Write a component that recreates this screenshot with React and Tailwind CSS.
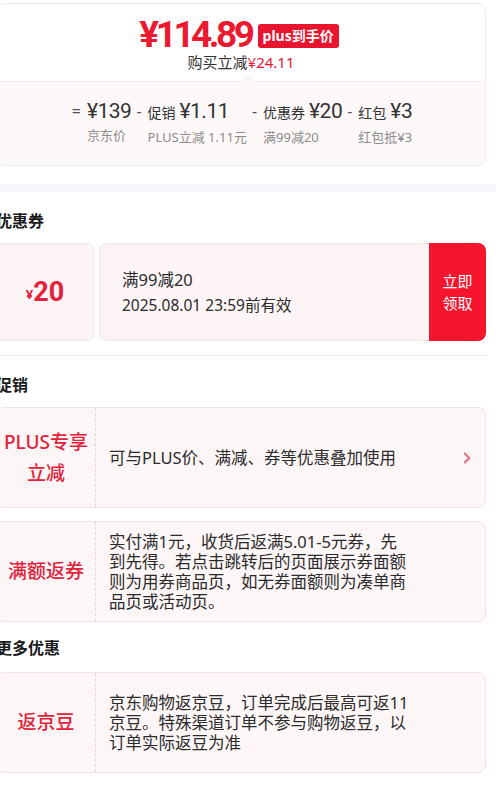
import React from 'react';
import { ChevronRight } from 'lucide-react';

const cjk = { fontFamily: '"Noto Sans", "Noto Sans CJK SC", sans-serif' };
const num = { fontFamily: 'Roboto, "Noto Sans CJK SC", sans-serif' };

const parts = [
  { op: '=', label: '', value: '¥139', sub: '京东价' },
  { op: '-', label: '促销', value: '¥1.11', sub: 'PLUS立减 1.11元' },
  { op: '-', label: '优惠券', value: '¥20', sub: '满99减20' },
  { op: '-', label: '红包', value: '¥3', sub: '红包抵¥3' },
];

const PromoCard = ({ title, lines, arrow }) => (
  <div className="flex h-[101px] rounded-[8px] border border-[#f3e1e4] bg-[#fdf6f7] overflow-hidden">
    <div className="w-[99px] shrink-0 flex items-center justify-center text-center text-[19px] font-medium leading-[31px] text-[#e3213a] border-r border-dashed border-[#ecd3d7]">
      {title}
    </div>
    <div className="flex-1 flex items-center pl-[13px] text-[16.5px] leading-[20px] text-[#2b2b2b]">
      <div>
        {lines.map((l, i) => (
          <div key={i}>{l}</div>
        ))}
      </div>
    </div>
    {arrow && (
      <div className="w-[36px] flex items-center justify-center text-[#e0788a]">
        <ChevronRight size={18} strokeWidth={3} />
      </div>
    )}
  </div>
);

export default function App() {
  return (
    <div className="w-[496px] min-h-[793px] bg-white overflow-hidden" style={cjk}>
      <div className="ml-[-4px] w-[490px] pt-[3px]">
        {/* 价格卡片 */}
        <div className="rounded-[8px] border border-[#ececec] overflow-hidden">
          <div className="h-[77px] flex flex-col items-center pt-[12px]">
            <div className="flex items-center gap-[6px] mr-[4px]">
              <span className="text-[37px] leading-[38px] font-bold tracking-[-3.5px] text-[#ec1a31]" style={num}>¥114.89</span>
              <span className="h-[24px] px-[5px] rounded-[3px] bg-[#e8152f] text-white text-[14px] font-bold leading-[24px] mt-[2px]">plus到手价</span>
            </div>
            <div className="text-[15px] leading-[20px] text-[#333] mt-[-2px]">
              购买立减<span className="text-[#e8152f]">¥24.11</span>
            </div>
          </div>
          <div className="relative h-[84px] bg-[#fdf8f8] border-t border-[#f7eced]">
            <div className="absolute left-[247px] top-[-5px] w-[8px] h-[8px] rotate-45 bg-[#fdf8f8] border-l border-t border-[#f7eced]" />
            <div className="flex justify-center gap-[5px] pt-[16px] pl-[2px]">
              {parts.map((p, i) => (
                <div key={i} className="flex items-start">
                  <span className="text-[16px] leading-[26px] text-[#555] mr-[6px]">{p.op}</span>
                  <div className="flex flex-col">
                    <div className="flex items-baseline gap-[4px] text-[#333]">
                      {p.label && <span className="text-[14px] leading-[26px]">{p.label}</span>}
                      <span className="text-[21px] leading-[26px] tracking-[-0.5px]" style={num}>{p.value}</span>
                    </div>
                    <div className="text-[13px] leading-[18px] text-[#8c8c8c] mt-[2px] whitespace-nowrap">{p.sub}</div>
                  </div>
                </div>
              ))}
            </div>
          </div>
        </div>
      </div>

      {/* 灰色分隔 */}
      <div className="h-[8px] bg-[#f5f6fa] mt-[18px]" />

      <div className="ml-[-4px] w-[490px]">
        {/* 优惠券 */}
        <div className="text-[16px] font-bold leading-[22px] text-[#1a1a1a] mt-[18px]">优惠券</div>
        <div className="flex h-[98px] mt-[11px] gap-[5px]">
          <div className="w-[98px] rounded-[6px] border border-[#f3e6e8] bg-[#fdf4f5] flex items-center justify-center text-[#e3213a]">
            <span className="text-[13px] font-bold mt-[5px]">¥</span>
            <span className="text-[27px] font-bold leading-[30px]" style={num}>20</span>
          </div>
          <div className="flex-1 flex rounded-[6px] border border-[#f3e6e8] bg-[#fdf4f5] overflow-hidden">
            <div className="flex-1 flex flex-col justify-center pl-[22px] text-[#2b2b2b]">
              <div className="text-[16.5px] leading-[24px]">满99减20</div>
              <div className="text-[15.5px] leading-[24px] mt-[1px]">2025.08.01 23:59前有效</div>
            </div>
          </div>
          <div className="w-[57px] -ml-[14px] rounded-r-[8px] bg-[#f7142d] flex items-center justify-center text-center text-white text-[15px] leading-[22px]">
            立即<br />领取
          </div>
        </div>
        <div className="h-px bg-[#eeeeee] mt-[14px] mr-[-2px]" />

        {/* 促销 */}
        <div className="text-[16px] font-bold leading-[22px] text-[#1a1a1a] mt-[18px]">促销</div>
        <div className="mt-[11px]">
          <PromoCard
            title={<>PLUS专享<br />立减</>}
            lines={['可与PLUS价、满减、券等优惠叠加使用']}
            arrow
          />
        </div>
        <div className="mt-[13px]">
          <PromoCard
            title="满额返券"
            lines={[
              '实付满1元，收货后返满5.01-5元券，先',
              '到先得。若点击跳转后的页面展示券面额',
              '则为用券商品页，如无券面额则为凑单商',
              '品页或活动页。',
            ]}
          />
        </div>

        {/* 更多优惠 */}
        <div className="text-[16px] font-bold leading-[22px] text-[#1a1a1a] mt-[15px]">更多优惠</div>
        <div className="mt-[13px]">
          <PromoCard
            title="返京豆"
            lines={[
              '京东购物返京豆，订单完成后最高可返11',
              '京豆。特殊渠道订单不参与购物返豆，以',
              '订单实际返豆为准',
            ]}
          />
        </div>
      </div>
    </div>
  );
}
